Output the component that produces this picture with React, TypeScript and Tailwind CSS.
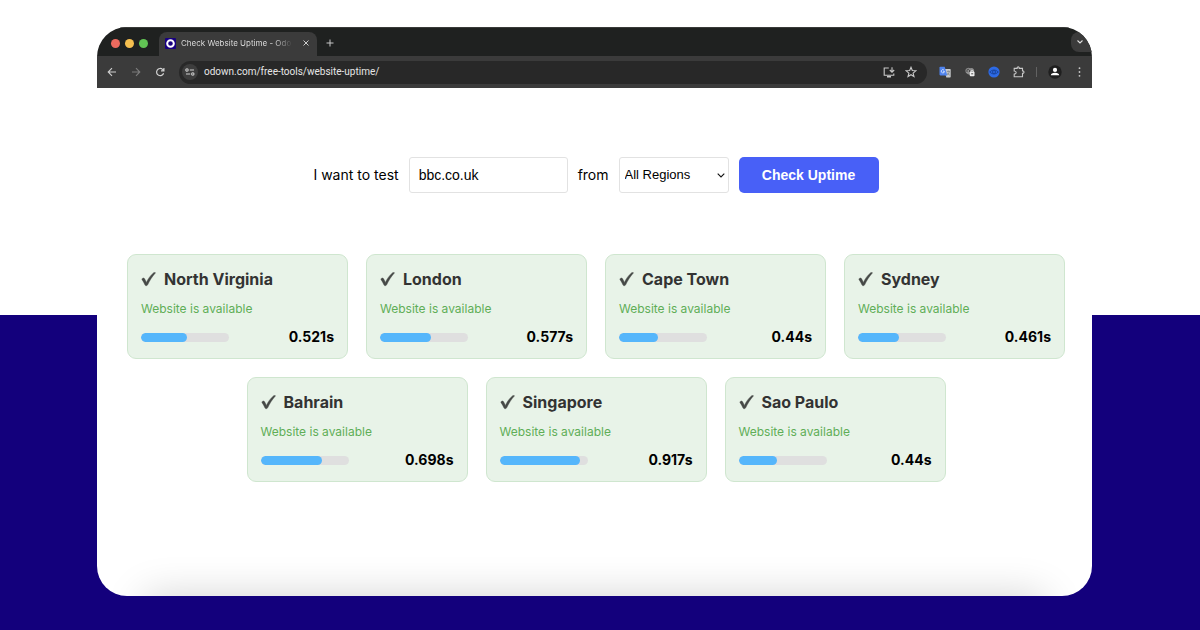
import React from "react";

type Region = { name: string; seconds: number };

const regions: Region[] = [
  { name: "North Virginia", seconds: 0.521 },
  { name: "London", seconds: 0.577 },
  { name: "Cape Town", seconds: 0.44 },
  { name: "Sydney", seconds: 0.461 },
  { name: "Bahrain", seconds: 0.698 },
  { name: "Singapore", seconds: 0.917 },
  { name: "Sao Paulo", seconds: 0.44 },
];

function Check() {
  return (
    <svg viewBox="0 0 15 15" className="h-[15px] w-[15px] shrink-0" aria-hidden="true">
      <path
        d="M0.9 7.4C0.7 6.6 2.2 5.5 3 6.1C3.8 7 4.6 8.6 5.3 10.4C7.2 6.5 9.6 3.2 12.4 0.9C12.9 0.4 14.8 0.4 14.4 1C11.3 4.4 8.8 8.4 6.7 12.8C6.2 13.8 4.5 14.1 4 13.1C3.1 11 2.2 9 0.9 7.4Z"
        fill="#464947"
        stroke="#464947"
        strokeWidth="0.4"
      />
    </svg>
  );
}

function RegionCard({ name, seconds }: Region) {
  return (
    <article className="w-[221px] rounded-[9px] border border-[#cfe6cf] bg-[#e8f3e8] px-[13px] pt-3 pb-[11px]">
      <h2 className="flex items-center gap-2 text-base leading-6 font-bold text-[#333]">
        <Check />
        {name}
      </h2>
      <p className="mt-[9px] text-[12px] leading-[18px] text-[#5fae57]">Website is available</p>
      <div className="mt-[9px] flex items-center justify-between">
        <div className="h-[9px] w-[88px] overflow-hidden rounded-full bg-[#dfdfdf]">
          <div className="h-full rounded-full bg-[#55b6fb]" style={{ width: `${seconds * 100}%` }} />
        </div>
        <span className="text-[14px] leading-5 font-bold text-black">{seconds}s</span>
      </div>
    </article>
  );
}

function TabStrip() {
  return (
    <div className="flex h-[29px] items-end border-t border-[#3a3b39] bg-[#1f2120] pl-[14px]">
      <div className="flex h-[26px] items-center gap-[5px]">
        <span className="h-[9px] w-[9px] rounded-full bg-[#ed6a5e]" />
        <span className="h-[9px] w-[9px] rounded-full bg-[#f5bf4f]" />
        <span className="h-[9px] w-[9px] rounded-full bg-[#61c454]" />
      </div>
      <div className="ml-[11px] flex h-6 w-[158px] items-center rounded-t-lg bg-[#3b3b3b] pr-[5px] pb-[2px] pl-[6px]">
        <svg viewBox="0 0 11 11" className="h-[11px] w-[11px] shrink-0" aria-hidden="true">
          <rect width="11" height="11" rx="1" fill="#180080" />
          <circle cx="5.5" cy="5.5" r="3.3" fill="none" stroke="#fff" strokeWidth="2" />
        </svg>
        <span className="ml-[5px] bg-gradient-to-r from-[#e6e6e6] from-85% to-[#4a4a4a] bg-clip-text text-[8px] leading-3 whitespace-nowrap text-transparent">
          Check Website Uptime - Odo
        </span>
        <button aria-label="Close tab" className="ml-auto flex h-3 w-3 items-center justify-center">
          <svg viewBox="0 0 6 6" className="h-[6px] w-[6px]" stroke="#dedede" strokeWidth="0.9">
            <path d="M0.5 0.5L5.5 5.5M5.5 0.5L0.5 5.5" />
          </svg>
        </button>
      </div>
      <button aria-label="New tab" className="ml-[9px] flex h-[26px] w-2 items-center">
        <svg viewBox="0 0 8 8" className="h-2 w-2" stroke="#c8c8c8" strokeWidth="1">
          <path d="M4 0.5V7.5M0.5 4H7.5" />
        </svg>
      </button>
      <button
        aria-label="Search tabs"
        className="mb-1 ml-auto flex h-5 w-[21px] items-center justify-center rounded-l-lg bg-[#3b3b3b] pr-[3px]"
      >
        <svg viewBox="0 0 6 4" className="h-1 w-[6px]" fill="none" stroke="#dedede" strokeWidth="1.1">
          <path d="M0.5 0.5L3 3L5.5 0.5" />
        </svg>
      </button>
    </div>
  );
}

function Toolbar() {
  return (
    <div className="flex h-8 items-center bg-[#3b3b3b] pr-[11px] pl-[10px]">
      <div className="flex items-center gap-[14px]">
        <button aria-label="Back">
          <svg viewBox="0 0 10 10" className="h-[10px] w-[10px]" fill="none" stroke="#d0d0d0" strokeWidth="1.1">
            <path d="M9 5H1.5M5 1.2L1.2 5L5 8.8" />
          </svg>
        </button>
        <button aria-label="Forward">
          <svg viewBox="0 0 10 10" className="h-[10px] w-[10px]" fill="none" stroke="#7d7d7d" strokeWidth="1.1">
            <path d="M1 5H8.5M5 1.2L8.8 5L5 8.8" />
          </svg>
        </button>
        <button aria-label="Reload">
          <svg viewBox="0 0 10 10" className="h-[10px] w-[10px]" fill="none" stroke="#d0d0d0" strokeWidth="1.2">
            <path d="M8.6 6.2A3.6 3.6 0 1 1 7.6 2.4L8.8 3.7M8.9 1V3.9H6" />
          </svg>
        </button>
      </div>
      <div className="ml-[14px] flex h-[23px] flex-1 items-center rounded-full bg-[#282828] pr-[10px] pl-[3px]">
        <span className="flex h-4 w-4 items-center justify-center rounded-full bg-[#3d3d3d]">
          <svg viewBox="0 0 10 8" className="h-2 w-[10px]" fill="none" stroke="#d0d0d0" strokeWidth="1.1">
            <circle cx="2" cy="2" r="1.2" />
            <path d="M4.8 2H9M1 6H5.2" />
            <circle cx="7.8" cy="6" r="1.2" />
          </svg>
        </span>
        <span className="ml-[6px] font-['Roboto',sans-serif] text-[10px] leading-4 text-[#e6e6e6]">
          odown.com/free-tools/website-uptime/
        </span>
        <span className="ml-auto flex items-center gap-[10px]">
          <button aria-label="Install app">
            <svg viewBox="0 0 12 11" className="h-[11px] w-3" fill="none" stroke="#c8c8c8" strokeWidth="1.1">
              <path d="M5.8 1H1.2V8.3H10.8V6.6M9 0.2V4.6M6.8 3L9 5.2L11.2 3" />
              <path d="M4 9.7H8" strokeWidth="1.6" />
            </svg>
          </button>
          <button aria-label="Bookmark">
            <svg viewBox="0 0 12 12" className="h-3 w-3" fill="none" stroke="#c8c8c8" strokeWidth="1.1">
              <path d="M6 1.3L7.3 4.5L10.8 4.8L8.1 7.1L9 10.5L6 8.7L3 10.5L3.9 7.1L1.2 4.8L4.7 4.5Z" />
            </svg>
          </button>
        </span>
      </div>
      <div className="ml-3 flex items-center">
        <button aria-label="Translate">
          <svg viewBox="0 0 12 12" className="h-3 w-3">
            <path d="M5 3H11Q11.7 3 11.7 3.8V10.7Q11.7 11.5 11 11.5H7.3Z" fill="#c9cbce" />
            <path d="M7.8 5.4H11M9.3 4.6V5.4M10.4 5.6Q9.8 8 8.2 9M8.4 6.8Q9 8.4 10.8 9.2" stroke="#737980" strokeWidth="0.7" fill="none" />
            <path d="M1.3 0.8H5.7L8.3 9.4H1.3Q0.5 9.4 0.5 8.6V1.6Q0.5 0.8 1.3 0.8Z" fill="#4f83ee" />
            <path d="M5 4.1A1.6 1.6 0 1 0 5.5 5.4H4.1" stroke="#e5edff" strokeWidth="0.8" fill="none" />
          </svg>
        </button>
        <button aria-label="Privacy extension" className="ml-[14px]">
          <svg viewBox="0 0 10 10" className="h-[10px] w-[10px]">
            <path d="M0.4 4A3 3 0 0 1 5 1.2A3 3 0 0 1 9.2 3.7V5H5V8L2.5 7Q0.4 5.8 0.4 4Z" fill="#8f8f8f" />
            <path d="M2 5V3Q2 2.3 2.8 2.3H4M4.5 5V3" stroke="#3b3b3b" strokeWidth="0.8" fill="none" />
            <rect x="4.8" y="4.8" width="4.7" height="4.5" rx="0.8" fill="#eee" />
            <path d="M6 4.8V4Q7.2 2.7 8.3 4V4.8" stroke="#eee" strokeWidth="0.8" fill="none" />
            <path d="M6.2 6.8H8.2" stroke="#3b3b3b" strokeWidth="0.9" />
          </svg>
        </button>
        <button aria-label="Page viewer" className="ml-[13px]">
          <svg viewBox="0 0 12 12" className="h-3 w-3">
            <circle cx="6" cy="6" r="5.6" fill="#2d6ae5" />
            <path d="M1.7 6Q6 1.9 10.3 6Q6 10.1 1.7 6Z" fill="none" stroke="#184398" strokeWidth="0.9" />
            <circle cx="6" cy="6" r="1.5" fill="none" stroke="#184398" strokeWidth="0.9" />
          </svg>
        </button>
        <button aria-label="Extensions" className="ml-[13px]">
          <svg viewBox="0 0 12 12" className="h-3 w-3" fill="none" stroke="#c8c8c8" strokeWidth="1.1">
            <path d="M1.2 2.4H4.2V1.5Q5.2 0.3 6.2 1.5V2.4H9.5V5H10.3Q11.7 6.1 10.3 7.3H9.5V10.8H1.2V8.1Q3.2 7.8 3.2 6.5Q3.2 5.2 1.2 5Z" />
          </svg>
        </button>
        <span className="ml-[11px] h-[10px] w-px bg-[#626262]" />
        <button aria-label="Profile" className="ml-[11px]">
          <svg viewBox="0 0 14 14" className="h-[14px] w-[14px]">
            <circle cx="7" cy="7" r="6.7" fill="#1f1f1f" />
            <circle cx="7" cy="4.9" r="2.1" fill="#fff" />
            <path d="M2.8 10.3Q3 7.8 7 7.8Q11 7.8 11.2 10.3Z" fill="#fff" />
          </svg>
        </button>
        <button aria-label="Browser menu" className="ml-4">
          <svg viewBox="0 0 3 10" className="h-[10px] w-[3px]" fill="#c8c8c8">
            <circle cx="1.5" cy="1.2" r="0.9" />
            <circle cx="1.5" cy="5" r="0.9" />
            <circle cx="1.5" cy="8.8" r="0.9" />
          </svg>
        </button>
      </div>
    </div>
  );
}

function TestForm() {
  return (
    <form
      className="flex flex-wrap items-center justify-center gap-[10px] text-[14px] leading-5 text-black"
      onSubmit={(e) => e.preventDefault()}
    >
      <label htmlFor="site">I want to test</label>
      <input
        id="site"
        type="text"
        defaultValue="bbc.co.uk"
        className="h-9 w-[159px] rounded-[3px] border border-[#e2e2e2] bg-white px-[9px] font-['Liberation_Sans',sans-serif] text-[14px]"
      />
      <label htmlFor="region">from</label>
      <div className="relative">
        <select
          id="region"
          className="block h-9 w-[110px] appearance-none rounded-[3px] border border-[#e2e2e2] bg-white pl-[5px] font-['Liberation_Sans',sans-serif] text-[13px]"
        >
          <option>All Regions</option>
          {regions.map((r) => (
            <option key={r.name}>{r.name}</option>
          ))}
        </select>
        <svg
          viewBox="0 0 8 5"
          className="pointer-events-none absolute top-4 right-1 h-[5px] w-2"
          fill="none"
          stroke="#111"
          strokeWidth="1.1"
          aria-hidden="true"
        >
          <path d="M0.7 0.7L4 4L7.3 0.7" />
        </svg>
      </div>
      <button className="h-9 w-[140px] rounded-[5px] bg-[#4860f7] font-['Liberation_Sans',sans-serif] text-[14px] font-bold text-white">
        Check Uptime
      </button>
    </form>
  );
}

export default function App() {
  return (
    <div className="flex min-h-screen bg-[linear-gradient(to_bottom,#fff_50%,#13007c_50%)] pt-[27px] pr-[108px] pb-[34px] pl-[97px] font-['Inter',sans-serif]">
      <div className="relative flex flex-1 flex-col overflow-hidden rounded-[30px] bg-white">
        <header>
          <TabStrip />
          <Toolbar />
        </header>
        <main className="flex-1 pt-[69px] pr-[27px] pb-12 pl-[30px]">
          <TestForm />
          <section aria-label="Results" className="mt-[61px] flex flex-wrap justify-center gap-[18px]">
            {regions.map((r) => (
              <RegionCard key={r.name} {...r} />
            ))}
          </section>
        </main>
        <div className="pointer-events-none absolute inset-x-12 top-full h-10 shadow-[0_0_40px_rgba(0,0,0,0.18)]" />
      </div>
    </div>
  );
}
